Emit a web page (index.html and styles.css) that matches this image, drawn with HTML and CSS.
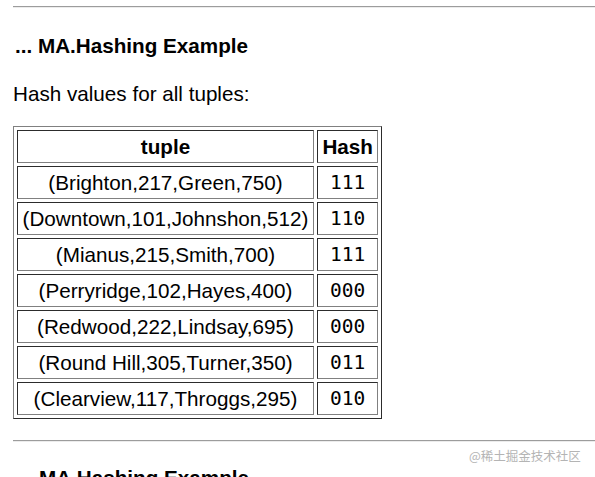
FILE: index.html
```html
<!DOCTYPE html>
<html>
<head>
<meta charset="utf-8">
<link rel="stylesheet" href="styles.css">
</head>
<body>
<hr class="rule rule-top">
<h4 class="title">... MA.Hashing Example</h4>
<p class="lead">Hash values for all tuples:</p>
<table class="hash-table">
  <tr><th>tuple</th><th>Hash</th></tr>
  <tr><td>(Brighton,217,Green,750)</td><td class="code">111</td></tr>
  <tr><td>(Downtown,101,Johnshon,512)</td><td class="code">110</td></tr>
  <tr><td>(Mianus,215,Smith,700)</td><td class="code">111</td></tr>
  <tr><td>(Perryridge,102,Hayes,400)</td><td class="code">000</td></tr>
  <tr><td>(Redwood,222,Lindsay,695)</td><td class="code">000</td></tr>
  <tr><td>(Round Hill,305,Turner,350)</td><td class="code">011</td></tr>
  <tr><td>(Clearview,117,Throggs,295)</td><td class="code">010</td></tr>
</table>
<hr class="rule rule-bottom">
<h4 class="title title-next">MA.Hashing Example</h4>
<div class="watermark">@稀土掘金技术社区</div>
</body>
</html>
```
FILE: styles.css
```css
html, body {
  margin: 0;
  padding: 0;
  background: #ffffff;
  overflow: hidden;
}
body {
  padding-left: 13px;
  font-family: "Liberation Sans", Arial, sans-serif;
  font-size: 20.67px;
  color: #000;
  height: 477px;
  position: relative;
}
.rule {
  display: block;
  height: 0;
  border: 0;
  border-top: 1px solid #9c9c9c;
  border-bottom: 1px solid #ececec;
  margin: 0;
}
.rule-top {
  margin-top: 6px;
}
.title {
  font-size: 20.67px;
  font-weight: bold;
  line-height: normal;
  margin: 26px 0 0 0;
  padding-left: 2px;
}
.lead {
  margin: 24px 0 0 0;
  line-height: normal;
}
.hash-table {
  margin-top: 20px;
  border: 1px outset #808080;
  border-spacing: 3px;
  border-collapse: separate;
}
.hash-table th,
.hash-table td {
  border: 1px inset #808080;
  padding: 3.5px 4.5px;
  line-height: 24px;
  text-align: center;
  font-size: 20.67px;
}
.hash-table th {
  font-weight: bold;
}
.hash-table td.code {
  font-family: "DejaVu Sans Mono", "Liberation Mono", monospace;
  font-size: 19.5px;
  font-weight: normal;
}
.rule-bottom {
  margin-top: 21px;
}
.title-next {
  margin-top: 24px;
  padding-left: 26px;
}
.watermark {
  position: absolute;
  left: 469px;
  top: 446px;
  font-family: "Noto Sans CJK SC", sans-serif;
  font-size: 12.5px;
  color: #b4b4b4;
  white-space: nowrap;
}
```
